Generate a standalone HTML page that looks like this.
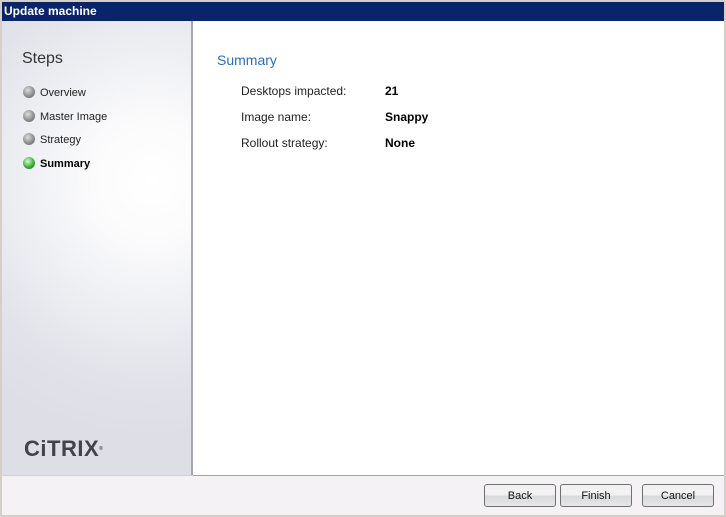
<!DOCTYPE html>
<html><head><style>
body{margin:0;width:726px;height:517px;background:#d4d0c8;font-family:"Liberation Sans",sans-serif;position:relative;overflow:hidden}
.t{position:absolute;left:2px;top:2px;width:722px;height:19px;background:#0a246a;color:#fff;font-weight:bold;font-size:12px;line-height:19px;text-indent:2px}
.l{position:absolute;left:2px;top:21px;width:189px;height:454px;background:radial-gradient(circle at 150px 160px,#fff 0,#fbfbfc 60px,#eeeff3 130px,#e2e3ea 200px,#dddee6 260px)}
.d{position:absolute;left:191px;top:21px;width:2px;height:454px;background:#a5a8b4}
.m{position:absolute;left:193px;top:21px;width:531px;height:454px;background:#fff;border-bottom:1px solid #a0a3ad}
.f{position:absolute;left:2px;top:476px;width:722px;height:39px;background:#f5f2f6}
.s{position:absolute;font-size:12px;color:#222;line-height:14px}
.dot{position:absolute;left:23px;width:12px;height:12px;border-radius:50%;background:radial-gradient(circle at 40% 35%,#ddd,#888 60%,#666);}
.b{position:absolute;top:484px;width:70px;height:21px;border:1px solid #707070;border-radius:3px;background:linear-gradient(#f2f2f2 50%,#d8d9dc 50%,#e6e6e8);font-size:11px;text-align:center;line-height:23px;color:#111}
</style></head><body>
<div class="t">Update machine</div>
<div class="l"></div><div class="d"></div><div class="m"></div><div class="f"></div>
<div class="s" style="left:22px;top:50px;font-size:16px;line-height:18px;color:#333">Steps</div>
<div class="dot" style="top:86px"></div><div class="s" style="left:40px;top:86px;font-size:11px">Overview</div>
<div class="dot" style="top:110px"></div><div class="s" style="left:40px;top:110px;font-size:11px">Master Image</div>
<div class="dot" style="top:133px"></div><div class="s" style="left:40px;top:133px;font-size:11px">Strategy</div>
<div class="dot" style="top:157px;background:radial-gradient(circle at 40% 35%,#cfc,#4a4 55%,#070)"></div><div class="s" style="left:40px;top:157px;font-size:11px;font-weight:bold;color:#000">Summary</div>
<div class="s" style="left:24px;top:437px;font-size:22px;line-height:24px;font-weight:bold;color:#444;letter-spacing:0.5px">CiTRIX<span style="font-size:5px;vertical-align:top">®</span></div>
<div class="s" style="left:217px;top:52px;font-size:14px;line-height:16px;color:#2a6ebb">Summary</div>
<div class="s" style="left:241px;top:84px">Desktops impacted:</div><div class="s" style="left:385px;top:84px;font-weight:bold;color:#000">21</div>
<div class="s" style="left:241px;top:110px">Image name:</div><div class="s" style="left:385px;top:110px;font-weight:bold;color:#000">Snappy</div>
<div class="s" style="left:241px;top:136px">Rollout strategy:</div><div class="s" style="left:385px;top:136px;font-weight:bold;color:#000">None</div>
<div class="b" style="left:484px">Back</div>
<div class="b" style="left:560px">Finish</div>
<div class="b" style="left:642px">Cancel</div>
</body></html>
